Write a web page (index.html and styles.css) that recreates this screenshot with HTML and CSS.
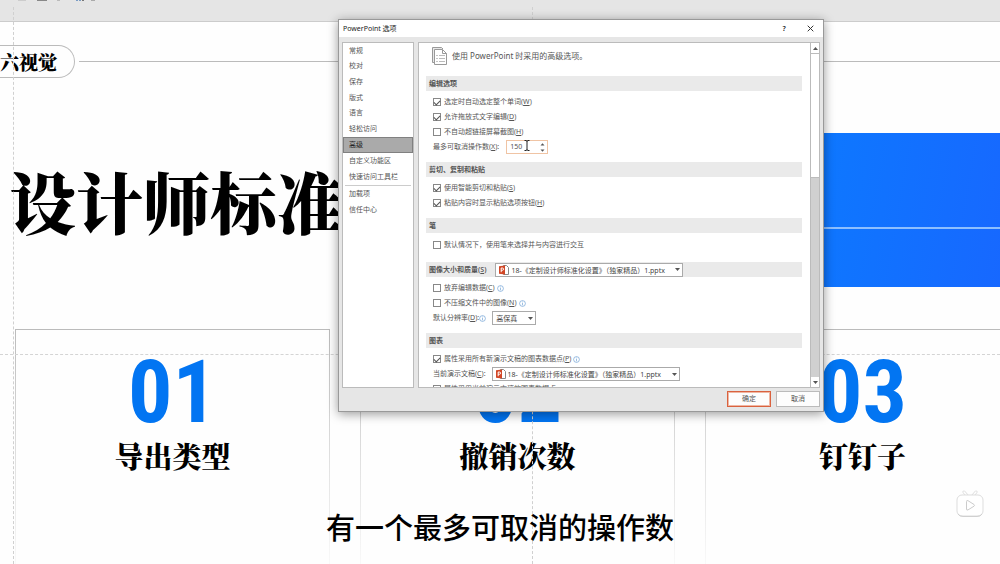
FILE: index.html
```html
<!DOCTYPE html>
<html lang="zh-CN">
<head>
<meta charset="utf-8">
<title>PowerPoint 选项</title>
<link rel="stylesheet" href="styles.css">
</head>
<body>
<div class="stage">
  <header class="ribbon">
    <svg class="ribbon-marks" width="100" height="3" viewBox="0 0 100 3" aria-hidden="true">
      <path d="M18 .5h8" stroke="#ccc"/><path d="M37 .5h10" stroke="#888"/><path d="M57 .5h3" stroke="#bbb"/><path d="M76 .5h2M79 .5h2" stroke="#7a9cc4"/><path d="M82 .5h2" stroke="#777"/><path d="M91 .5h4" stroke="#aaa"/>
    </svg>
  </header>
  <main class="slide">
    <div class="brand-row">
      <span class="brand">六视觉</span>
      <span class="brand-line"></span>
    </div>
    <div class="hero">
      <h1 class="hero-title">设计师标准</h1>
      <div class="hero-panel"><span class="hero-line"></span></div>
    </div>
    <div class="cards">
      <section class="card"><div class="card-number">01</div><h2 class="card-label">导出类型</h2></section>
      <section class="card"><div class="card-number">02</div><h2 class="card-label">撤销次数</h2></section>
      <section class="card"><div class="card-number">03</div><h2 class="card-label">钉钉子</h2></section>
    </div>
  </main>
  <span class="guide guide-v guide-left"></span>
  <span class="guide guide-v guide-mid"></span>
  <span class="guide guide-h"></span>

  <div class="dialog" role="dialog" aria-labelledby="dialog-title">
    <div class="titlebar">
      <span id="dialog-title" class="dialog-title">PowerPoint 选项</span>
      <button class="title-button" aria-label="帮助">?</button>
      <button class="title-button" aria-label="关闭"><svg width="7" height="7" viewBox="0 0 7 7"><path d="M.7.7l5.6 5.6M6.3.7L.7 6.3" stroke="#333" fill="none"/></svg></button>
    </div>
    <div class="panes">
      <nav class="nav">
        <div class="nav-group nav-general">
          <button class="nav-item">常规</button>
          <button class="nav-item">校对</button>
          <button class="nav-item">保存</button>
          <button class="nav-item">版式</button>
          <button class="nav-item">语言</button>
          <button class="nav-item">轻松访问</button>
        </div>
        <button class="nav-item nav-current">高级</button>
        <div class="nav-group nav-custom">
          <button class="nav-item">自定义功能区</button>
          <button class="nav-item">快速访问工具栏</button>
        </div>
        <div class="nav-group nav-addins">
          <button class="nav-item">加载项</button>
          <button class="nav-item">信任中心</button>
        </div>
      </nav>
      <div class="content">
        <div class="options">
          <div class="intro">
            <svg width="17" height="20" viewBox="0 0 17 20" fill="none" stroke="#999"><path d="M3 16.500H1.500V1.500h9L12 3" fill="#e8e8e8"/><path d="M3.500 3.500h8l4 4v11h-12z" fill="#fff"/><path d="M11.500 3.500v4h4"/><path d="M8 9.500h6M8 12.500h6M8 15.500h6" stroke="#bbb"/><path d="M5.500 9.500h1M5.500 12.500h1M5.500 15.500h1" stroke="#888"/></svg>
            <span>使用 PowerPoint 时采用的高级选项。</span>
          </div>
          <section class="group">
            <h3 class="group-head">编辑选项</h3>
            <div class="rows">
              <label class="row"><input class="check" type="checkbox" checked>选定时自动选定整个单词(<u>W</u>)</label>
              <label class="row"><input class="check" type="checkbox" checked>允许拖放式文字编辑(<u>D</u>)</label>
              <label class="row"><input class="check" type="checkbox">不自动超链接屏幕截图(<u>H</u>)</label>
              <div class="row">
                <label for="undo">最多可取消操作数(<u>X</u>):</label>
                <span class="spinner">
                  <input class="spinner-input" id="undo" type="text" value="150">
                  <svg width="5" height="11" viewBox="0 0 5 11" fill="#555"><path d="M.5 3.500L2.500 1.300 4.500 3.500zM.5 7.500L2.500 9.700 4.500 7.500z"/></svg>
                </span>
              </div>
            </div>
          </section>
          <section class="group">
            <h3 class="group-head">剪切、复制和粘贴</h3>
            <div class="rows">
              <label class="row"><input class="check" type="checkbox" checked>使用智能剪切和粘贴(<u>S</u>)</label>
              <label class="row"><input class="check" type="checkbox" checked>粘贴内容时显示粘贴选项按钮(<u>H</u>)</label>
            </div>
          </section>
          <section class="group group-pen">
            <h3 class="group-head">笔</h3>
            <div class="rows">
              <label class="row"><input class="check" type="checkbox">默认情况下，使用笔来选择并与内容进行交互</label>
            </div>
          </section>
          <section class="group">
            <div class="group-head">
              <label for="image-file">图像大小和质量(<u>S</u>)</label>
              <span class="picker picker-file">
                <svg width="10" height="10" viewBox="0 0 10 10"><path d="M4.500.5h3l2 2v7h-5z" fill="#fff" stroke="#888"/><path d="M0 1.300L6 .5v9L0 8.700z" fill="#d24726"/><path d="M2.200 7.200V3h1.200a1 1 0 010 2.300H2.200" fill="none" stroke="#fff"/></svg>
                <select class="select" id="image-file"><option>18-《定制设计师标准化设置》（独家精品）1.pptx</option></select>
                <svg class="arrow" viewBox="0 0 5 3"><path d="M0 0h5L2.500 3z"/></svg>
              </span>
            </div>
            <div class="rows">
              <div class="row"><label class="tick"><input class="check" type="checkbox">放弃编辑数据(<u>C</u>)</label><svg class="info" viewBox="0 0 7 7"><circle cx="3.500" cy="3.500" r="2.900"/><path d="M3.500 3v2.300M3.500 1.600v.8"/></svg></div>
              <div class="row"><label class="tick"><input class="check" type="checkbox">不压缩文件中的图像(<u>N</u>)</label><svg class="info" viewBox="0 0 7 7"><circle cx="3.500" cy="3.500" r="2.900"/><path d="M3.500 3v2.300M3.500 1.600v.8"/></svg></div>
              <div class="row"><label for="resolution">默认分辨率(<u>D</u>):</label><svg class="info info-tight" viewBox="0 0 7 7"><circle cx="3.500" cy="3.500" r="2.900"/><path d="M3.500 3v2.300M3.500 1.600v.8"/></svg>
                <span class="picker picker-short"><select class="select" id="resolution"><option>高保真</option></select><svg class="arrow" viewBox="0 0 5 3"><path d="M0 0h5L2.500 3z"/></svg></span></div>
            </div>
          </section>
          <section class="group">
            <h3 class="group-head">图表</h3>
            <div class="rows">
              <div class="row"><label class="tick"><input class="check" type="checkbox" checked>属性采用所有新演示文稿的图表数据点(<u>P</u>)</label><svg class="info" viewBox="0 0 7 7"><circle cx="3.500" cy="3.500" r="2.900"/><path d="M3.500 3v2.300M3.500 1.600v.8"/></svg></div>
              <div class="row"><label for="chart-file">当前演示文稿(<u>C</u>):</label>
                <span class="picker picker-file">
                  <svg width="10" height="10" viewBox="0 0 10 10"><path d="M4.500.5h3l2 2v7h-5z" fill="#fff" stroke="#888"/><path d="M0 1.300L6 .5v9L0 8.700z" fill="#d24726"/><path d="M2.200 7.200V3h1.200a1 1 0 010 2.300H2.200" fill="none" stroke="#fff"/></svg>
                  <select class="select" id="chart-file"><option>18-《定制设计师标准化设置》（独家精品）1.pptx</option></select>
                  <svg class="arrow" viewBox="0 0 5 3"><path d="M0 0h5L2.500 3z"/></svg>
                </span></div>
              <label class="row"><input class="check" type="checkbox" checked>属性采用当前演示文稿的图表数据点</label>
            </div>
          </section>
        </div>
        <div class="scrollbar">
          <button class="scroll-button" aria-label="向上"><svg width="5" height="3" viewBox="0 0 5 3"><path d="M0 3L2.500 0 5 3z" fill="#555"/></svg></button>
          <span class="scroll-thumb"></span>
          <button class="scroll-button" aria-label="向下"><svg width="5" height="3" viewBox="0 0 5 3"><path d="M0 0L2.500 3 5 0z" fill="#555"/></svg></button>
        </div>
      </div>
    </div>
    <div class="actions">
      <button class="action action-ok">确定</button>
      <button class="action">取消</button>
    </div>
    <svg class="ibeam" width="6" height="11" viewBox="0 0 6 11" fill="none" stroke="#222"><path d="M.5.5h1.500l1 .7 1-.7h1.500M3 1v9M.5 10.500h1.500l1-.7 1 .7h1.500"/></svg>
  </div>

  <p class="caption">有一个最多可取消的操作数</p>
  <svg class="watermark" width="28" height="30" viewBox="0 0 28 30" fill="none" stroke="#ddd" stroke-linejoin="round"><path d="M8 2l3 3.500M20 2l-3 3.500" stroke-width="3" stroke-linecap="round"/><path d="M8 2l3 3.500M20 2l-3 3.500" stroke="#fff" stroke-width="1.500" stroke-linecap="round"/><rect x="1" y="5" width="26" height="21" rx="5" fill="#fff"/><path d="M2 24q1.500 2.500 5 2.500h14q3.500 0 5-2.500" stroke="#d0d0d0"/><path d="M10.500 11.500q0-1.500 1.500-.8l6 3.800q1 .9 0 1.700l-6 3.700q-1.500.7-1.500-.8z" stroke="#ccc"/></svg>
</div>
</body>
</html>
```
FILE: styles.css
```css
* { box-sizing: border-box; }

body {
  margin: 0;
  font-family: "Noto Sans", "Noto Sans CJK SC", sans-serif;
  background: #fefefe;
  color: #000;
}

h1, h2, h3, p { margin: 0; }

button, input, select {
  margin: 0;
  padding: 0;
  font: inherit;
  color: inherit;
}

svg { display: block; flex: none; }

.stage {
  position: relative;
  min-height: 100vh;
  overflow: hidden;
}

/* Slide behind the dialog */
.ribbon {
  height: 22px;
  background: #e5e5e5;
  border-bottom: 1px solid #ccc;
}

.brand-row {
  display: flex;
  align-items: center;
  gap: 4px;
  padding-top: 23px;
}

.brand {
  height: 33px;
  padding: 0 17px 0 0;
  border: 1px solid #bbb;
  border-left: 0;
  border-radius: 0 17px 17px 0;
  font: 900 19px/31px "Noto Serif CJK SC", "Noto Sans CJK SC", serif;
}

.brand-line {
  flex: 1;
  height: 1px;
  background: #bbb;
}

.hero {
  display: grid;
  grid-template-columns: 1fr 1fr;
  align-items: start;
  margin-top: 55px;
}

.hero-title {
  padding: 19px 0 0 9px;
  font: 900 67px/96px "Noto Serif CJK SC", "Noto Sans CJK SC", serif;
  white-space: nowrap;
}

.hero-panel {
  height: 154px;
  padding-top: 94px;
  background: linear-gradient(100deg, #0b7cff 50%, #1768ff);
}

.hero-line {
  display: block;
  height: 2px;
  background: #8dbfff;
}

.cards {
  display: grid;
  grid-template-columns: repeat(3, 1fr);
  gap: 30px;
  margin: 42px -20px 0 15px;
}

.card {
  height: 240px;
  padding-top: 18px;
  border: 1px solid;
  border-bottom: 0;
  border-image: linear-gradient(#bbb, #e4e4e4 60%, #fafafa) 1;
  text-align: center;
}

.card-number {
  color: #0275f2;
  font: 700 88px/88px "Liberation Sans Narrow", "Roboto Condensed", Roboto, sans-serif;
}

.card-label {
  font: 900 29px/40px "Noto Serif CJK SC", "Noto Sans CJK SC", serif;
}

.guide { position: absolute; }
.guide-v { top: 7px; bottom: 0; border-left: 1px dashed #d0d0d0; }
.guide-left { left: 13px; }
.guide-mid { left: 532px; }
.guide-h { top: 354px; left: 0; right: 0; border-top: 1px dashed #d4d4d4; }

.caption {
  position: absolute;
  top: 505px;
  left: 0;
  right: 0;
  text-align: center;
  font: 500 29px/42px "Noto Sans CJK SC", sans-serif;
}

.watermark {
  position: absolute;
  right: 16px;
  bottom: 49px;
}

/* Options dialog */
.dialog {
  position: absolute;
  top: 19px;
  left: 338px;
  width: 486px;
  border: 1px solid #999;
  background: #e6e6e6;
  box-shadow: 0 2px 10px rgba(0, 0, 0, .4);
  color: #555;
  font-size: 7px;
  line-height: 14px;
  white-space: nowrap;
}

.titlebar {
  display: flex;
  align-items: center;
  height: 17px;
  padding-left: 4px;
  background: #fff;
  color: #222;
}

.dialog-title { flex: 1; }

.title-button {
  display: grid;
  place-items: center;
  width: 26px;
  height: 16px;
  border: 0;
  background: none;
  font-weight: 600;
}

.panes {
  display: flex;
  gap: 4px;
  height: 346px;
  margin: 5px 3px 0;
}

.nav {
  width: 72px;
  background: #fff;
  border: 1px solid #bbb;
}

.nav-group { display: grid; }
.nav-general { height: 94px; }

.nav-item {
  display: block;
  width: 100%;
  height: 16px;
  padding-left: 6px;
  border: 0;
  background: none;
  line-height: 14px;
  text-align: left;
}

.nav-general .nav-item { height: auto; }

.nav-current {
  background: #aaa;
  border: 1px solid #808080;
  padding-left: 5px;
  line-height: 12px;
  color: #222;
}

.nav-addins {
  margin: 0 2px;
  border-top: 1px solid #ccc;
}

.nav-addins .nav-item { padding-left: 4px; }

.content {
  display: flex;
  flex: 1;
  min-width: 0;
  background: #fff;
  border: 1px solid #bbb;
}

.options {
  flex: 1;
  min-width: 0;
  padding: 0 8px 0 7px;
  overflow: hidden;
}

.intro {
  display: flex;
  gap: 4px;
  height: 33px;
  padding: 3px 5px 0;
  font-size: 8px;
  line-height: 19px;
}

.group { margin-bottom: 8px; }
.group-pen { margin-bottom: 10px; }
.group-pen .rows { padding-top: 5px; }

.group-head {
  display: flex;
  align-items: center;
  gap: 9px;
  height: 15px;
  padding-left: 3px;
  background: #eaeaea;
  font-size: 7px;
  font-weight: 600;
}

.rows {
  display: grid;
  gap: 1px;
  padding: 4px 7px 0;
}

.row, .tick { display: flex; align-items: center; }
.row { height: 14px; }

.check {
  appearance: none;
  display: grid;
  place-items: center;
  width: 8px;
  height: 8px;
  margin-right: 3px;
  border: 1px solid #888;
  background: #fff;
}

.check:checked::before {
  content: "";
  width: 5px;
  height: 3px;
  border: solid #555;
  border-width: 0 0 1px 1px;
  transform: rotate(-45deg);
}

.spinner {
  display: flex;
  align-items: center;
  width: 42px;
  height: 14px;
  margin-left: 7px;
  padding: 0 2px 0 3px;
  border: 1px solid #f0c4a4;
  background: #fff;
}

.spinner-input {
  flex: 1;
  min-width: 0;
  height: 12px;
  border: 0;
  background: none;
}

.picker {
  display: flex;
  align-items: center;
  height: 14px;
  padding: 0 2px 0 3px;
  border: 1px solid #aaa;
  background: #fff;
  font-weight: 400;
}

.picker-file { width: 188px; gap: 2px; }
.picker-short { width: 44px; margin-left: 6px; }
.row .picker-file { margin-left: 6px; }

.select {
  appearance: none;
  flex: 1;
  min-width: 0;
  height: 12px;
  border: 0;
  background: none;
  color: #444;
}

.arrow {
  width: 5px;
  height: 3px;
  fill: #555;
}

.info {
  width: 7px;
  height: 7px;
  margin-left: 2px;
  fill: none;
  stroke: #5b93cf;
  stroke-width: .6;
}

.info-tight { margin-left: 0; }

.scrollbar {
  display: flex;
  flex-direction: column;
  width: 9px;
  border-left: 1px solid #bbb;
  background: #d0d0d0;
}

.scroll-button {
  display: grid;
  place-items: center;
  height: 10px;
  border: 0;
  background: #fff;
}

.scroll-thumb {
  height: 125px;
  margin-bottom: auto;
  border: solid #bbb;
  border-width: 1px 0;
  background: #fff;
}

.actions {
  display: flex;
  justify-content: flex-end;
  gap: 5px;
  padding: 3px 3px 4px;
}

.action {
  width: 44px;
  height: 16px;
  border: 1px solid #bbb;
  background: #fdfdfd;
  line-height: 12px;
}

.action-ok { border: 1px solid #d9623f; outline: 1px solid #f0b7a3; outline-offset: -2px; }

.ibeam {
  position: absolute;
  top: 120px;
  left: 185px;
}
```
